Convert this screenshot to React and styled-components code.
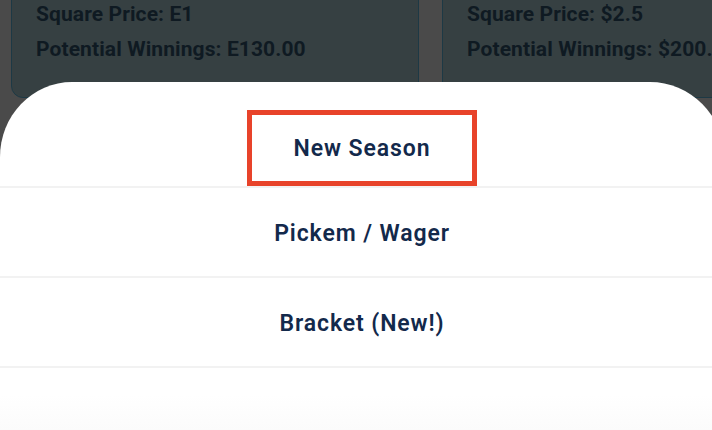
import React from 'react';
import styled, { createGlobalStyle } from 'styled-components';

const GlobalStyle = createGlobalStyle`
  html, body {
    margin: 0;
    padding: 0;
    height: 100%;
    overflow: hidden;
    background: #4a4a4a;
    font-family: Roboto, "Liberation Sans", sans-serif;
  }
`;

const pools = [
  { id: 1, price: 'E1', winnings: 'E130.00' },
  { id: 2, price: '$2.5', winnings: '$200.00' },
];

const menu = [
  { id: 'season', label: 'New Season', highlighted: true },
  { id: 'pickem', label: 'Pickem / Wager' },
  { id: 'bracket', label: 'Bracket (New!)' },
];

const BottomSheetMenu = ({ items }) => {
  return (
    <Sheet>
      {items.map((item) =>
        item.highlighted ? (
          <Item key={item.id} $first>
            <Highlight>
              <Label>{item.label}</Label>
            </Highlight>
          </Item>
        ) : (
          <Item key={item.id}>
            <Label>{item.label}</Label>
          </Item>
        ),
      )}
    </Sheet>
  );
};

const App = () => {
  return (
    <>
      <GlobalStyle />
      <Page>
        <CardRow>
          {pools.map((pool) => (
            <Card key={pool.id}>
              <CardLine>Square Price: {pool.price}</CardLine>
              <CardLine>Potential Winnings: {pool.winnings}</CardLine>
            </Card>
          ))}
        </CardRow>
        <BottomSheetMenu items={menu} />
      </Page>
    </>
  );
};

const Page = styled.div`
  position: relative;
  width: 712px;
  height: 430px;
  overflow: hidden;
`;

const CardRow = styled.div`
  display: flex;
  gap: 23px;
  padding-left: 11px;
  margin-top: -40px;
`;

const Card = styled.div`
  flex: 0 0 408px;
  box-sizing: border-box;
  height: 138px;
  padding: 41px 24px 0;
  background: #364042;
  border: 1.5px solid #1d3945;
  border-radius: 12px;
  display: flex;
  flex-direction: column;
  gap: 10px;
`;

const CardLine = styled.div`
  font-size: 21px;
  line-height: 25px;
  font-weight: 700;
  letter-spacing: 0.1px;
  color: #0f1a22;
  white-space: nowrap;
`;

const Sheet = styled.div`
  position: absolute;
  top: 82px;
  left: 0;
  bottom: 0;
  width: 724px;
  box-sizing: border-box;
  padding-top: 28px;
  background: linear-gradient(to bottom, #ffffff 0%, #ffffff 90%, #fbfbfb 100%);
  border-radius: 72px 74px 0 0 / 75px 75px 0 0;
  display: flex;
  flex-direction: column;
`;

const Item = styled.div`
  height: ${(props) => (props.$first ? '78px' : '90px')};
  box-sizing: border-box;
  padding-top: ${(props) => (props.$first ? '0' : '3px')};
  border-bottom: 2px solid #f2f2f2;
  display: flex;
  justify-content: center;
  align-items: ${(props) => (props.$first ? 'flex-start' : 'center')};
`;

const Highlight = styled.div`
  width: 230px;
  height: 76px;
  box-sizing: border-box;
  border: 5px solid #e8432a;
  display: flex;
  align-items: center;
  justify-content: center;
`;

const Label = styled.span`
  font-size: 23px;
  font-weight: 600;
  letter-spacing: 0.9px;
  color: #13294b;
`;

export default App;
